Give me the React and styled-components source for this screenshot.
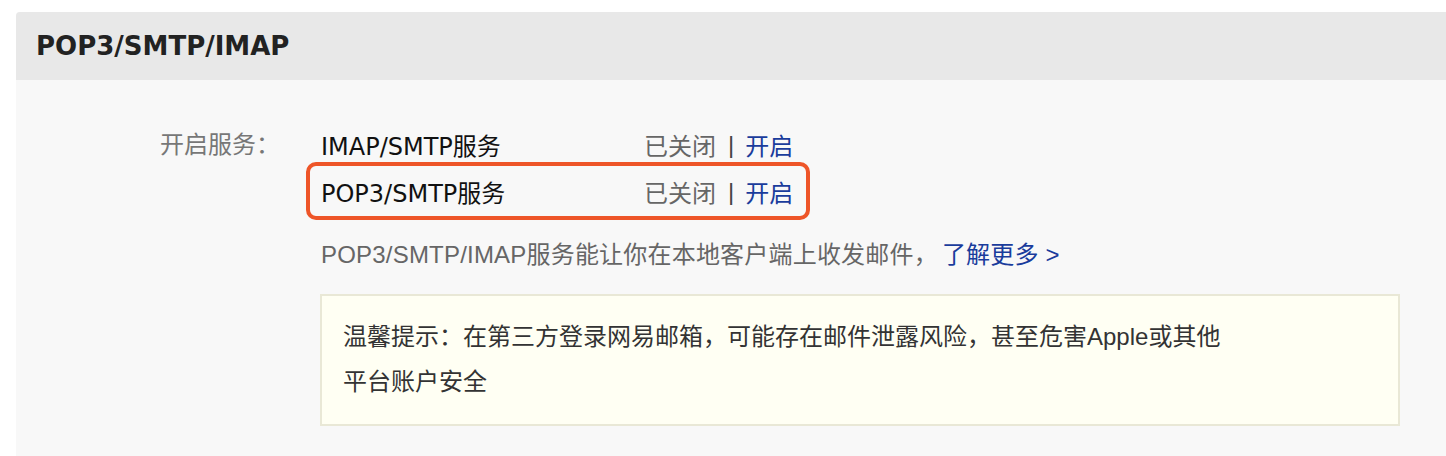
import React from 'react'
import styled, { createGlobalStyle } from 'styled-components'

const GlobalStyle = createGlobalStyle`
    html, body {
        margin: 0;
        padding: 0;
        background: #ffffff;
        overflow: hidden;
    }
`

const Page = styled.div`
    padding: 12px 0 0 16px;
    height: 456px;
    box-sizing: border-box;
`

const Panel = styled.section`
    background-color: #f8f8f8;
    border-top-left-radius: 4px;
    overflow: hidden;
    min-height: 460px;
`

const Header = styled.div`
    height: 68px;
    background-color: #e8e8e8;
    display: flex;
    align-items: center;
    padding-left: 20px;
    font-family: "DejaVu Sans", Verdana, sans-serif;
    font-weight: bold;
    font-size: 26px;
    color: #222;
`

const Body = styled.div`
    display: grid;
    grid-template-columns: 161px 1fr;
    padding: 41px 0 0 144px;
`

const Label = styled.div`
    font-family: "Noto Sans CJK SC", sans-serif;
    font-size: 24px;
    line-height: 43px;
    color: #777;
`

const Content = styled.div`
    display: flex;
    flex-direction: column;
`

const ServiceRow = styled.div`
    position: relative;
    display: flex;
    align-items: center;
    height: 47px;
    font-size: 24px;

    &::after {
        content: '';
        display: ${p => (p.$highlight ? 'block' : 'none')};
        position: absolute;
        top: -6px;
        bottom: -5px;
        left: -15px;
        width: 504px;
        border: 4px solid #ee5528;
        border-radius: 10px;
        box-sizing: border-box;
    }
`

const ServiceName = styled.span`
    width: 323px;
    font-family: "DejaVu Sans", Verdana, "Noto Sans CJK SC", sans-serif;
    color: #111;
`

const Status = styled.span`
    font-family: "Noto Sans CJK SC", sans-serif;
    color: #666;
`

const Divider = styled.span`
    font-family: "Liberation Sans", sans-serif;
    color: #444;
    margin: 0 11px 0 12px;
`

const Link = styled.a`
    font-family: "Liberation Sans", "Noto Sans CJK SC", sans-serif;
    color: #1a3c9c;
    text-decoration: none;
    cursor: pointer;
    margin-left: ${p => p.$gap || 0}px;
`

const Description = styled.p`
    margin: 16px 0 0;
    line-height: 47px;
    font-family: "Liberation Sans", "Noto Sans CJK SC", sans-serif;
    font-size: 24px;
    letter-spacing: 0.2px;
    color: #666;
`

const Tip = styled.div`
    margin: 16px 0 0 -1px;
    width: 1080px;
    box-sizing: border-box;
    padding: 18px 21px 20px;
    background-color: #fffff3;
    border: 2px solid #e9e8d6;
    font-family: "Liberation Sans", "Noto Sans CJK SC", sans-serif;
    font-size: 24px;
    line-height: 45px;
    color: #333;
`

const services = [
    { name: 'IMAP/SMTP服务', highlight: false },
    { name: 'POP3/SMTP服务', highlight: true },
]

export default function App() {
    return (
        <>
            <GlobalStyle />
            <Page>
                <Panel>
                    <Header>POP3/SMTP/IMAP</Header>
                    <Body>
                        <Label>开启服务：</Label>
                        <Content>
                            {services.map(s => (
                                <ServiceRow key={s.name} $highlight={s.highlight}>
                                    <ServiceName>{s.name}</ServiceName>
                                    <Status>已关闭</Status>
                                    <Divider>|</Divider>
                                    <Link>开启</Link>
                                </ServiceRow>
                            ))}
                            <Description>
                                POP3/SMTP/IMAP服务能让你在本地客户端上收发邮件，<Link $gap={4}>了解更多 &gt;</Link>
                            </Description>
                            <Tip>
                                温馨提示：在第三方登录网易邮箱，可能存在邮件泄露风险，甚至危害Apple或其他
                                <br />
                                平台账户安全
                            </Tip>
                        </Content>
                    </Body>
                </Panel>
            </Page>
        </>
    )
}
